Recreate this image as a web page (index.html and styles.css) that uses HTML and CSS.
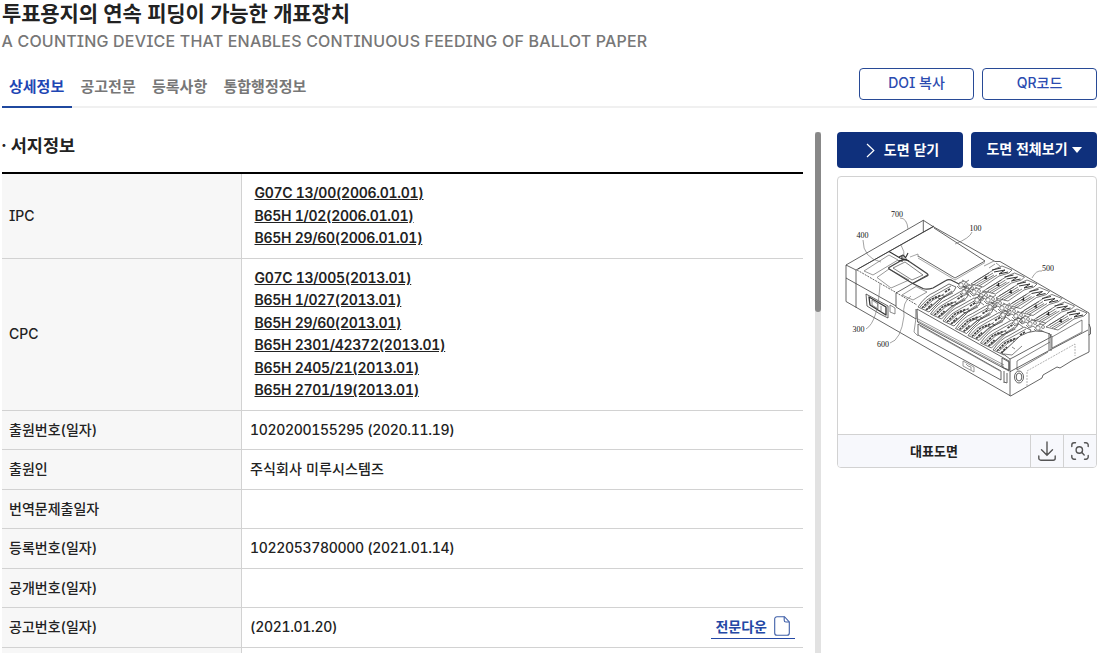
FILE: index.html
```html
<!DOCTYPE html>
<html lang="ko">
<head>
  <meta charset="UTF-8">
  <title>투표용지의 연속 피딩이 가능한 개표장치</title>
  <link rel="stylesheet" href="styles.css">
</head>
<body>
  <header class="page-head">
    <h1>투표용지의 연속 피딩이 가능한 개표장치</h1>
    <p class="title-en">A COUNTING DEVICE THAT ENABLES CONTINUOUS FEEDING OF BALLOT PAPER</p>
  </header>

  <div class="tab-bar">
    <nav class="tabs">
      <a class="tab active">상세정보</a>
      <a class="tab">공고전문</a>
      <a class="tab">등록사항</a>
      <a class="tab">통합행정정보</a>
    </nav>
    <div class="tab-buttons">
      <button class="btn-line">DOI 복사</button>
      <button class="btn-line">QR코드</button>
    </div>
  </div>

  <main class="content">
    <section class="detail">
      <h2>· 서지정보</h2>
      <div class="info">
        <div class="row">
          <div class="th en">IPC</div>
          <div class="td codes">
            <a>G07C 13/00(2006.01.01)</a>
            <a>B65H 1/02(2006.01.01)</a>
            <a>B65H 29/60(2006.01.01)</a>
          </div>
        </div>
        <div class="row">
          <div class="th en">CPC</div>
          <div class="td codes">
            <a>G07C 13/005(2013.01)</a>
            <a>B65H 1/027(2013.01)</a>
            <a>B65H 29/60(2013.01)</a>
            <a>B65H 2301/42372(2013.01)</a>
            <a>B65H 2405/21(2013.01)</a>
            <a>B65H 2701/19(2013.01)</a>
          </div>
        </div>
        <div class="row"><div class="th">출원번호(일자)</div><div class="td">1020200155295 (2020.11.19)</div></div>
        <div class="row"><div class="th">출원인</div><div class="td ko">주식회사 미루시스템즈</div></div>
        <div class="row"><div class="th">번역문제출일자</div><div class="td"></div></div>
        <div class="row"><div class="th">등록번호(일자)</div><div class="td">1022053780000 (2021.01.14)</div></div>
        <div class="row"><div class="th">공개번호(일자)</div><div class="td"></div></div>
        <div class="row">
          <div class="th">공고번호(일자)</div>
          <div class="td">
            <span>(2021.01.20)</span>
            <a class="download">전문다운
              <svg width="16" height="20" viewBox="0 0 16 20" fill="none" stroke="#3f5fa8" stroke-width="1.1"><path d="M3 .7h7.5L15.3 6v11a2.3 2.3 0 0 1-2.3 2.3H3A2.3 2.3 0 0 1 .7 17V3A2.3 2.3 0 0 1 3 .7z"/><path d="M10.2.8v3.4A1.8 1.8 0 0 0 12 6h3.2"/></svg>
            </a>
          </div>
        </div>
        <div class="row last"><div class="th"></div><div class="td"></div></div>
      </div>
    </section>

    <div class="scrollbar"><div class="thumb"></div></div>

    <aside class="drawing">
      <div class="drawing-buttons">
        <button class="btn-fill btn-close">
          <svg width="9" height="15" viewBox="0 0 9 15" fill="none" stroke="#fff" stroke-width="1.2"><path d="M1 1l6.8 6.5L1 14"/></svg>
          <span>도면 닫기</span>
        </button>
        <button class="btn-fill btn-all"><span>도면 전체보기</span>
          <svg width="10" height="6" viewBox="0 0 10 6" fill="#fff"><path d="M0 0h10L5 6z"/></svg>
        </button>
      </div>
      <div class="card">
        <svg class="figure" viewBox="838 177 258 257" fill="none" stroke="#333" stroke-width=".75" stroke-linejoin="round">
          <defs>
            <!-- stacker slots: front bank and rear bank -->
            <g id="slot">
              <path d="M0 0Q7-11 17-15L31-23L38-20L36-16L25-9L11 5z" fill="#fff" stroke="#333" stroke-width=".7"/>
              <path d="M2 0Q8-8 17-12L33-21M9 3L19-6L34-16M6 1L15-7L26-13M11 2L22-8L35-14" stroke="#444" stroke-width=".7"/>
              <path d="M4 1L12-7L18-10M8 3L14-3M17-9L23-12M27-15L32-18" stroke="#444" stroke-width="1.7" stroke-dasharray="2.5 .8"/>
              <path d="M20-9l3 1M24-12l3 2" stroke="#333"/>
            </g>
            <g id="slot2">
              <path d="M0 0L24-15L31-18L41-14L38-11L28-8L12 3z" fill="#fff" stroke="#444" stroke-width=".7"/>
              <path d="M4 0L22-11M6 1L23-9M8 2L26-9M3-2L18-11" stroke="#444" stroke-width=".7"/>
              <path d="M23-12L34-14L28-10L37-12M21-14L30-16" stroke="#333" stroke-width="1"/>
              <path d="M13-6l3 1M15-8v3" stroke="#222" stroke-width="1.3"/>
            </g>
            <g id="joint">
              <circle cx="0" cy="0" r="2.2" fill="#fff" stroke="#444" stroke-width=".6"/>
              <circle cx="5" cy="-1" r="1.5" stroke="#444" stroke-width=".6"/>
              <path d="M-4 1l3 3 4-2 4 3M1-5l4 2 3-2M-2-2l5-2" stroke="#444" stroke-width=".7"/>
            </g>
          </defs>

          <!-- housing -->
          <path d="M846 265L923.3 220.3L933.3 226.7L995 261.5L1000 261.5L1089 313V352L1073 360L1060 368L1057 367L1043 375L1042 378L1010.7 396L846 301.5z"/>
          <path d="M846 265L856 270V307.5M856 270L933.3 226.7M846 278L896 306M923.3 220.3V232"/>
          <path d="M857 270L896 292.5L917 305" stroke-dasharray="2 1"/>
          <path d="M896 293V307L916 319V309M896 293L928 274.5"/>
          <path d="M858 269L934 226M918 256L955 278L985 261L934 228"/>
          <path d="M918 258L955 280L985 262.5M910 257L918 254V257" stroke="#888"/>

          <!-- feeding tray and cable -->
          <path d="M864 271L889 255L898 260L873 275zM877 277.5L889 269L909 280L891 288zM902 295L916 286.5L927 292L913 300z" stroke="#777"/>
          <path d="M889 267.5L903 259.5Q905 259 907 260L927 273.5Q929 275 927 276L912.7 283.5L890 269.5Q888 268.5 889 267.5zM912.7 283.5L923 288.5Q927 290 933 288L946 280.5Q949 278.5 953 281L965 287" stroke="#444" stroke-width="1.3"/>
          <path d="M893 268L905 262L923 275L912 280z" stroke-width=".6"/>
          <path d="M889 251.5L900 258L909 261M899 257l4-2 3 3M898 261l9-2M902 256v6M906 257l2-4" stroke-width="1.1"/>

          <!-- connector port -->
          <path d="M866 294L888 306V318L880 314L867 306z"/>
          <path d="M869 297L886 307V315L870 305z" stroke-width="1.3"/>
          <path d="M872 300v5l6 4v-5zM881 306v5M890 305l5 3v6l-5-2z" stroke="#666"/>

          <!-- stacker banks -->
          <g>
            <use href="#slot2" x="971" y="284"/>
            <use href="#slot2" x="983.5" y="291"/>
            <use href="#slot2" x="996" y="298"/>
            <use href="#slot2" x="1008.5" y="305.5"/>
            <use href="#slot2" x="1021" y="312.5"/>
            <use href="#slot2" x="1033.5" y="320"/>
            <use href="#slot2" x="1046" y="327"/>
          </g>
          <g>
            <use href="#slot" x="918" y="307"/>
            <use href="#slot" x="930.5" y="314"/>
            <use href="#slot" x="943" y="321"/>
            <use href="#slot" x="955.5" y="328.5"/>
            <use href="#slot" x="968" y="335.5"/>
            <use href="#slot" x="980.5" y="343"/>
            <use href="#slot" x="993" y="350"/>
          </g>
          <g>
            <use href="#joint" x="961" y="285"/><use href="#joint" x="967" y="289"/><use href="#joint" x="974" y="292"/>
            <use href="#joint" x="981" y="296"/><use href="#joint" x="988" y="300"/><use href="#joint" x="995" y="304"/>
            <use href="#joint" x="1002" y="308"/><use href="#joint" x="1009" y="312"/><use href="#joint" x="1016" y="316"/>
            <use href="#joint" x="1023" y="320"/><use href="#joint" x="1030" y="324"/><use href="#joint" x="1038" y="328"/>
            <use href="#joint" x="964" y="292"/><use href="#joint" x="977" y="300"/><use href="#joint" x="990" y="307"/>
            <use href="#joint" x="1003" y="315"/><use href="#joint" x="1016" y="322"/>
          </g>

          <!-- end cover, front and side panels -->
          <path d="M1002 353L1020 336Q1036 327 1050 334L1051 337L1014 357L1010 359z" fill="#fff"/>
          <path d="M1004 354L1012 355L1022 346M1012 347l3 2" stroke-width=".6"/>
          <path d="M917 309L1009 361V371L917.5 322zM918 324L1001 371V380L918 335zM1010 359V396M1010 371.7L1050 350L1088 330"/>
          <path d="M918 321L1004 367M918 319L1004 365M920 326L1000 371" stroke="#777"/>
          <path d="M1017 361L1050 342M1017 361V370L1048 352M1052 336V348L1082 332V320L1052 337" stroke-width=".6"/>
          <path d="M1027 386V371L1075 344V356" stroke="#999" stroke-dasharray="2 1"/>
          <ellipse cx="1019" cy="377" rx="4.5" ry="6"/>
          <ellipse cx="1019" cy="377" rx="2.8" ry="4"/>
          <path d="M1049 333v17M1051 334v17M1089 324l1.5 4v6l-2 1M1004 371v12M1007 373v10l-3-1M1002 358l7 4v8l-7-3z" stroke="#555" stroke-width=".9"/>
          <path d="M963 361l11 6v5l-11-6zM966 364l2 2 3 1v3" stroke="#777"/>
          <path d="M916 318l-2 14 4 4" stroke="#777"/>
          <path d="M984 266l10-5M989 268l6-4M996 263l4 3" stroke="#777"/>

          <!-- leader lines -->
          <path d="M900 218Q907 218 908 229M863 240Q863 258 881 262M972 232Q970 238 955 244M1042 271Q1036 270 1032 278M866 329Q878 322 880 283M890 343Q901 340 904 316Q902 302 911 296M904 259Q905 251 901 245" stroke="#666" stroke-width=".6"/>
          <g class="labels">
            <text x="891" y="217">700</text>
            <text x="856.5" y="238">400</text>
            <text x="969.5" y="231">100</text>
            <text x="1042" y="271">500</text>
            <text x="852.5" y="332">300</text>
            <text x="877" y="346.5">600</text>
          </g>
        </svg>
        <div class="card-foot">
          <strong>대표도면</strong>
          <a class="icon-btn"><svg width="18" height="20" viewBox="0 0 18 20" fill="none" stroke="#555" stroke-width="1.4" stroke-linecap="round"><path d="M9 1v13M3.5 8.8L9 14.2l5.5-5.4M.8 15v2.2a2 2 0 0 0 2 2h12.4a2 2 0 0 0 2-2V15"/></svg></a>
          <a class="icon-btn"><svg width="18" height="18" viewBox="0 0 18 18" fill="none" stroke="#555" stroke-width="1.4" stroke-linecap="round"><path d="M.8 4.5V3A2.2 2.2 0 0 1 3 .8h1.5M13.5.8H15A2.2 2.2 0 0 1 17.2 3v1.5M17.2 13.5V15a2.2 2.2 0 0 1-2.2 2.2h-1.5M4.5 17.2H3A2.2 2.2 0 0 1 .8 15v-1.5"/><circle cx="8.3" cy="8" r="3.2"/><path d="M10.6 10.3l2.6 2.6"/></svg></a>
        </div>
      </div>
    </aside>
  </main>
</body>
</html>
```
FILE: styles.css
```css
* {
  box-sizing: border-box;
}
body {
  margin: 0;
  padding: 0 8px 0 2px;
  font-family: Inter, "Noto Sans CJK KR", sans-serif;
  font-feature-settings: "cv08", "tnum";
  font-size: 14px;
  font-weight: 500;
  color: #222;
  background: #fff;
}
h1, h2, p {
  margin: 0;
}
h1 {
  font-size: 21px;
  line-height: 27px;
  font-weight: 700;
  letter-spacing: -.15px;
}
.title-en {
  font-size: 16px;
  line-height: 28px;
  padding-bottom: 1px;
  margin-left: -.5px;
  letter-spacing: .18px;
  color: #777;
}
.tab-bar {
  display: flex;
  justify-content: space-between;
  height: 52px;
  border-bottom: 2px solid #f0f0f0;
}
.tabs {
  display: flex;
  height: 52px;
}
.tab {
  padding: 0 8px 0 7px;
  margin-right: 1.3px;
  line-height: 62px;
  font-size: 15px;
  font-weight: 700;
  color: #777;
}
.tab.active {
  color: #1e46b4;
  border-bottom: 2px solid #1f489f;
}
.tab-buttons {
  display: flex;
  gap: 8px;
  padding-top: 12px;
}
button {
  font: inherit;
  padding: 0;
}
.btn-line {
  width: 115px;
  height: 32px;
  padding-bottom: 4px;
  color: #2b4bb0;
  background: #fff;
  border: 1px solid #284a96;
  border-radius: 4px;
}
.content {
  display: flex;
  padding-top: 24px;
}
.detail {
  width: 801px;
}
h2 {
  height: 40px;
  font-size: 17.5px;
  line-height: 27px;
  font-weight: 700;
  margin-left: -1px;
  word-spacing: -.8px;
}
.info {
  border-top: 2px solid #000;
  padding-top: .25px;
}
.row {
  display: flex;
  min-height: 39.5px;
  border-bottom: 1px solid #d2d2d2;
}
.row.last {
  min-height: 5px;
  border-bottom: 0;
}
.th {
  width: 240px;
  padding: 0 0 3px 7px;
  display: flex;
  align-items: center;
  background: #f7f7f7;
  border-right: 1px solid #d2d2d2;
}
.th.en {
  padding-bottom: 1px;
}
.td {
  flex: 1;
  padding: 0 8px 2px;
  display: flex;
  align-items: center;
  justify-content: space-between;
  letter-spacing: -.32px;
}
.td.ko {
  padding-bottom: 4px;
  letter-spacing: .13px;
}
.codes {
  flex-direction: column;
  align-items: flex-start;
  padding: 8px 12.5px;
  letter-spacing: -.28px;
}
.codes a {
  line-height: 22.5px;
  font-weight: 600;
  text-decoration: underline;
}
.download {
  display: flex;
  align-items: center;
  gap: 7px;
  height: 24px;
  padding: 0 5px 0 4px;
  font-weight: 700;
  letter-spacing: 0;
  color: #2448a5;
  border-bottom: 1px solid #2448a5;
}
.scrollbar {
  width: 6px;
  height: 521px;
  margin: 0 16px 0 12px;
  background: #e2e2e2;
}
.thumb {
  height: 180px;
  border-radius: 3px;
  background: #888;
}
.drawing {
  width: 260px;
}
.drawing-buttons {
  display: flex;
  gap: 8px;
}
.btn-fill {
  width: 126px;
  height: 36px;
  display: flex;
  align-items: center;
  justify-content: center;
  gap: 4px;
  font-weight: 700;
  color: #fff;
  background: #0f307c;
  border: 0;
  border-radius: 4px;
}
.btn-fill span {
  padding-bottom: 3px;
}
.btn-close {
  gap: 9px;
  padding-left: 5px;
}
.btn-all span {
  padding-bottom: 4px;
}
.card {
  margin-top: 8px;
  height: 292px;
  display: flex;
  flex-direction: column;
  border: 1px solid #d2d2d2;
  border-radius: 4px;
  overflow: hidden;
}
.figure {
  width: 258px;
  height: 257px;
}
.labels {
  font-family: "Liberation Serif", serif;
  font-size: 8px;
  font-weight: 400;
  fill: #111;
  stroke: none;
  opacity: .99;
}
.card-foot {
  flex: 1;
  display: flex;
  background: #f7f8fc;
  border-top: 1px solid #d2d2d2;
}
.card-foot strong {
  flex: 1;
  line-height: 32px;
  text-align: center;
  font-size: 13px;
}
.icon-btn {
  width: 33px;
  display: flex;
  align-items: center;
  justify-content: center;
  border-left: 1px solid #d2d2d2;
}
```
